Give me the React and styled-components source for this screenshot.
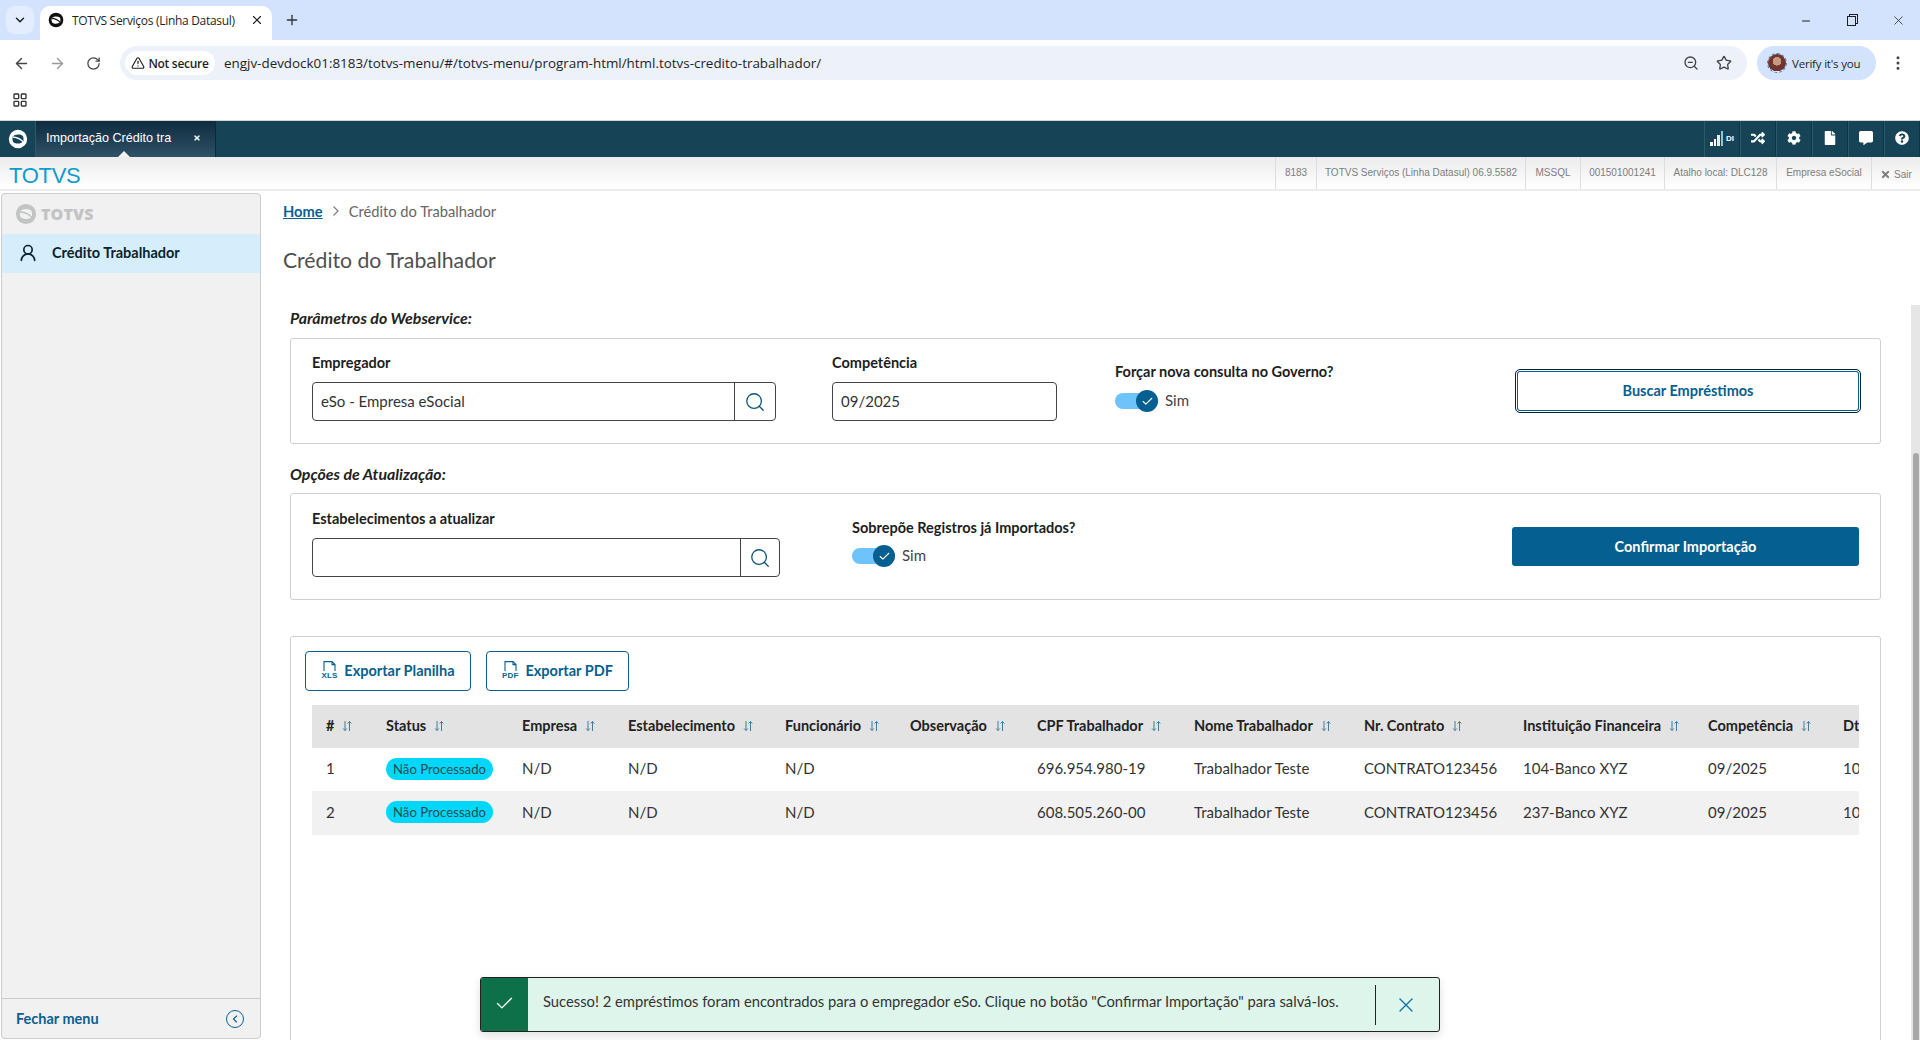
import React from "react";
import styled, { createGlobalStyle } from "styled-components";
import { FaRandom, FaCog, FaFile, FaCommentAlt, FaQuestionCircle, FaTimes } from "react-icons/fa";
import { ArrowLeft, ArrowRight, RotateCw, TriangleAlert, ZoomOut, Star, EllipsisVertical, ChevronDown, Plus, X, Minus, LayoutGrid, Search, Check, UserRound, ChevronLeft } from "lucide-react";

const Global = createGlobalStyle`
  html, body { margin: 0; padding: 0; height: 1040px; overflow: hidden; background: #fff; }
  * { box-sizing: border-box; }
  body { font-family: "Lato", "Noto Sans", sans-serif; color: #1a1a1a; }
`;

const Page = styled.div`
  width: 1920px; height: 1040px; display: flex; flex-direction: column; position: relative; overflow: hidden;
`;

/* browser chrome */
const TabStrip = styled.div`
  height: 40px; background: #d3e3fd; display: flex; align-items: flex-end; padding-left: 6px; flex: none;
`;
const TabMenu = styled.div`
  width: 28px; height: 28px; margin-bottom: 6px; border-radius: 9px; background: #e3edfd; display: flex; align-items: center; justify-content: center; color: #1f1f1f;
`;
const BrowserTab = styled.div`
  width: 232px; height: 34px; margin-left: 6px; background: #fff; border-radius: 10px 10px 0 0; display: flex; align-items: center; padding: 0 8px 6px; gap: 8px;
  font: 12px "Open Sans", sans-serif; color: #1f1f1f; white-space: nowrap;
`;
const TabTitle = styled.span` flex: 1; overflow: hidden; letter-spacing: -0.3px; `;
const NewTab = styled.div` margin: 0 0 12px 12px; color: #333; display: flex; `;
const WinControls = styled.div` margin: 13px 0 0 auto; align-self: flex-start; display: flex; gap: 35px; padding-right: 14px; color: #1f1f1f; align-items: center; `;
const RestoreIcon = styled.div`
  width: 9px; height: 10px; border: 1px solid #1f1f1f; box-shadow: 2px -2px 0 -1px #d3e3fd, 2px -2px 0 0 #1f1f1f;
`;
const Toolbar = styled.div`
  height: 40px; background: #fff; display: flex; align-items: flex-end; flex: none; padding-left: 3px;
`;
const NavIcon = styled.div`
  width: ${p => p.$w || 36}px; display: flex; justify-content: center; align-self: center; margin-top: 6px; color: ${p => p.$dim ? "#9a9a9a" : "#444"}; flex: none;
`;
const Omnibox = styled.div`
  margin-left: 9px; width: 1627px; height: 34px; border-radius: 17px; background: #ecf1fa; display: flex; align-items: center; padding: 0 5px; font: 13.42px "Open Sans", sans-serif; color: #1f1f1f; flex: none;
`;
const Secure = styled.div`
  height: 24px; width: 90px; border-radius: 12px; background: #fff; display: flex; align-items: center; justify-content: center; gap: 3px; font-size: 12px; font-weight: 600; margin-right: 9px; letter-spacing: -0.3px;
`;
const OmniRight = styled.div` margin-left: auto; display: flex; gap: 17px; padding-right: 10px; color: #444; align-items: center; `;
const Profile = styled.div`
  margin-left: 10px; width: 119px; height: 34px; border-radius: 17px; background: #d3e3fd; display: flex; align-items: center; padding-left: 11px; gap: 6px; font: 11.5px "Open Sans", sans-serif; color: #1f1f1f; letter-spacing: -0.2px; flex: none;
`;
const Avatar = styled.div`
  width: 18px; height: 18px; border-radius: 50%; background: radial-gradient(circle at 50% 40%, #c79a80 0 30%, #70352e 32% 70%, #e8e8f0 72%); outline: 1px dashed #4a6fb0;
`;
const Bookmarks = styled.div`
  height: 41px; background: #fff; border-bottom: 1px solid #d4d4d4; padding: 12px 12px 0; flex: none; color: #333;
`;

/* app top bar */
const TopBar = styled.div` height: 36px; background: #164356; display: flex; flex: none; `;
const LogoCell = styled.div`
  width: 36px; display: flex; align-items: center; justify-content: center; border-right: 1px solid #2b5a6d; color: #fff; padding-bottom: 1px;
`;
const AppTab = styled.div`
  position: relative; width: 180px; background: linear-gradient(#0e2c40, #2f5166); border-right: 1px solid #0d2a3a; display: flex; align-items: center; justify-content: space-between; padding: 0 14px 3px 10px;
  font: 12.6px "Liberation Sans", Arial, sans-serif; color: #fff;
  &::after { content: ""; position: absolute; left: 82px; bottom: 0; border: 6px solid transparent; border-top: 0; border-bottom-color: #f2f2f2; }
`;
const TopIcons = styled.div` margin-left: auto; display: flex; `;
const TopIcon = styled.div`
  width: 36px; display: flex; align-items: center; justify-content: center; gap: 3px; color: #fff; border-left: 1px solid #2b5a6d; border-right: 1px solid #0f3444; font-size: 14px; padding-bottom: 2px;
`;
const SmallDI = styled.span` font: 700 8px "Liberation Sans", sans-serif; `;
const Bars = styled.div` display: flex; align-items: flex-end; gap: 1px; height: 15px; `;
const Bar = styled.i` width: 2.5px; background: ${p => p.$c}; height: ${p => p.$h}px; display: block; `;

/* info strip */
const InfoBar = styled.div`
  height: 34px; background: linear-gradient(#ececec, #fff); border-bottom: 2px solid #ececec; display: flex; align-items: stretch; flex: none;
`;
const Brand = styled.div` font: 22px "Liberation Sans", Arial, sans-serif; color: #0f9bd0; padding-left: 9px; line-height: 37px; letter-spacing: -0.3px; `;
const InfoItems = styled.div` margin-left: auto; display: flex; `;
const InfoItem = styled.div`
  width: ${p => p.$w}px; border-left: 1px solid #ddd; display: flex; align-items: center; justify-content: center; gap: 3px; font: 10px "Liberation Sans", Arial, sans-serif; color: #7d7d7d; padding-bottom: 1px; white-space: nowrap;
`;
const SairItem = styled(InfoItem)` padding-top: 2px; padding-bottom: 0; `;

/* body */
const Body = styled.div` flex: 1; display: flex; min-height: 0; `;
const Sidebar = styled.aside`
  width: 260px; margin: 2px 0 1px 1px; background: #f1f1f1; border: 1px solid #ccc; border-radius: 4px; display: flex; flex-direction: column; flex: none;
`;
const SideLogo = styled.div`
  height: 40px; display: flex; align-items: center; padding: 0 0 0 13px; gap: 4px; color: #c2c4c4; font: 800 16px "Open Sans", sans-serif; letter-spacing: 0.1px;
`;
const SideItem = styled.div`
  height: 39px; background: #d6eefc; display: flex; align-items: center; padding: 0 0 2px 16px; gap: 14px; font: 700 14.5px "Lato", sans-serif; color: #0b2230;
`;
const SideFooter = styled.div`
  margin-top: auto; height: 40px; border-top: 1px solid #ccc; display: flex; align-items: center; justify-content: space-between; padding: 0 16px 0 14px; font: 700 14.5px "Lato", sans-serif; color: #0b5f90;
`;
const CircleBtn = styled.div`
  width: 18px; height: 18px; border-radius: 50%; border: 1.5px solid #0b5f90; display: flex; align-items: center; justify-content: center; color: #0b5f90;
`;
const Main = styled.main` flex: 1; min-width: 0; padding: 0 39px 0 22px; `;
const Crumbs = styled.nav`
  margin-top: 11px; height: 18px; display: flex; align-items: center; gap: 9px; font-size: 14.7px; color: #666;
`;
const CrumbLink = styled.a` color: #0b5f90; font-weight: 700; text-decoration: underline; `;
const Title = styled.h1` margin: 25px 0 0; font-weight: 400; font-size: 21.2px; line-height: 30px; color: #4f4f4f; `;
const Section = styled.div` margin: 0 0 0 7px; `;
const SectionLabel = styled.h2`
  margin: ${p => p.$mt}px 0 0; font-size: 15.9px; line-height: 18px; font-style: italic; font-weight: 700; color: #222;
`;
const Box = styled.div`
  margin-top: ${p => p.$mt}px; height: ${p => p.$h}px; border: 1px solid #d0d0d0; border-radius: 3px; display: flex; padding-left: 21px; align-items: flex-start;
`;
const Field = styled.div` width: ${p => p.$w}px; margin-top: ${p => p.$mt}px; margin-left: ${p => p.$ml || 0}px; flex: none; `;
const FieldLabel = styled.div` font-size: 14.5px; font-weight: 700; line-height: 18px; color: #1d1d1d; margin-bottom: ${p => p.$mb ?? 10}px; `;
const InputWrap = styled.div`
  height: 39px; border: 1px solid #444; border-radius: 4px; display: flex; align-items: center; font-size: 15px; color: #333; background: #fff;
`;
const InputText = styled.div` flex: 1; padding: 0 0 2px 8px; `;
const SearchBtn = styled.div`
  width: ${p => p.$w}px; height: 100%; border-left: 1px solid #444; display: flex; align-items: center; justify-content: center; color: #0b5278; flex: none;
`;
const ToggleRow = styled.div` display: flex; align-items: center; gap: 7px; font-size: 15px; color: #444; height: 22px; `;
const ToggleText = styled.span` margin-top: -2px; `;
const Track = styled.div` position: relative; width: 43px; height: 16px; background: #6ec3fb; border-radius: 8px; `;
const Knob = styled.div`
  position: absolute; right: 0; top: -3px; width: 22px; height: 22px; border-radius: 50%; background: #055f90; display: flex; align-items: center; justify-content: center; color: #fff;
`;
const OutlineBtn = styled.button`
  width: ${p => p.$w}px; height: ${p => p.$h}px; margin-top: ${p => p.$mt}px; margin-left: ${p => p.$ml}px; flex: none; background: #fff; border: 1px solid #0a2233; border-radius: 5px; font: 700 14.5px "Lato", sans-serif; color: #055f90; box-shadow: inset 0 0 0 1px #fff, inset 0 0 0 2px #055f90; padding: 0 0 2px;
`;
const SolidBtn = styled.button`
  width: ${p => p.$w}px; height: ${p => p.$h}px; margin-top: ${p => p.$mt}px; margin-left: ${p => p.$ml}px; flex: none; background: #055f90; border: 0; border-radius: 3px; font: 700 14.5px "Lato", sans-serif; color: #fff;
`;
const ResultBox = styled.div`
  margin-top: 36px; border: 1px solid #d0d0d0; border-radius: 3px; height: 500px; padding: 14px 21px 0 14px;
`;
const ExportRow = styled.div` display: flex; gap: 15px; `;
const ExportBtn = styled.button`
  height: 40px; width: ${p => p.$w}px; background: #fff; border: 1px solid #055f90; border-radius: 4px; display: flex; align-items: center; justify-content: center; gap: 7px; font: 700 14.5px "Lato", sans-serif; color: #055f90; padding: 0 0 2px;
`;
const DocIcon = styled.div` display: flex; flex-direction: column; align-items: center; color: #055f90; line-height: 1; `;
const DocTag = styled.span` font: 700 8px "Liberation Sans", sans-serif; letter-spacing: .1px; `;
const TableClip = styled.div` margin: 14px 0 0 7px; width: 1547px; overflow: hidden; `;
const Table = styled.table` border-collapse: collapse; table-layout: fixed; width: 1547px; `;
const Th = styled.th`
  width: ${p => p.$w}px; height: 43px; background: #e3e3e3; text-align: left; padding: 0 0 3px 14px; font-size: 14.5px; font-weight: 700; color: #222; white-space: nowrap;
`;
const SortIcon = styled.svg` margin-left: 8px; color: #3f7ca0; vertical-align: -1px; `;
const Tr = styled.tr` background: ${p => p.$alt ? "#f1f1f1" : "#fff"}; `;
const Td = styled.td` height: ${p => p.$h || 43}px; padding: 0 0 3px 14px; font-size: 15px; color: #333; white-space: nowrap; `;
const Badge = styled.span`
  display: inline-flex; align-items: center; justify-content: center; width: 107px; height: 22px; border-radius: 11px; background: #00d7fb; font-size: 13.2px; color: #2c4a52; vertical-align: -2px;
`;
const Toast = styled.div`
  position: absolute; left: 480px; top: 977px; width: 960px; height: 55px; background: #def5eb; border: 1px solid #222; border-radius: 3px; display: flex; align-items: center; box-shadow: 0 4px 10px rgba(0,0,0,.12); font-size: 14.75px; color: #333; overflow: hidden;
`;
const ToastIcon = styled.div` width: 47px; align-self: stretch; background: #0e7048; color: #fff; display: flex; align-items: center; justify-content: center; flex: none; padding-bottom: 2px; `;
const ToastText = styled.div` flex: 1; padding: 0 0 8px 15px; white-space: nowrap; `;
const ToastSep = styled.div` width: 1px; height: 40px; background: #222; margin-right: 18px; flex: none; `;
const ToastClose = styled.div` width: 45px; color: #0b6fa8; display: flex; flex: none; `;
const ScrollTrack = styled.div` position: absolute; right: 0; top: 305px; bottom: 0; width: 9px; background: #e6e6e6; `;
const ScrollThumb = styled.div` position: absolute; left: 2px; right: 1px; top: 148px; bottom: 0; border-radius: 4px 4px 0 0; background: #a8a8a8; `;

const Logo = ({ size = 18, fg = "currentColor" }) => (
  <svg width={size} height={size} viewBox="0 0 24 24">
    <path
      fillRule="evenodd"
      fill={fg}
      d="M12 1a11 11 0 1 0 0 22a11 11 0 1 0 0-22ZM5.5 9C8.5 6.3 14 5.6 17.8 8.4C18.6 10 18.8 12.2 18.5 14.6C15.6 17.9 10 18.6 6.2 15.6C5.4 13.8 5.2 11.2 5.5 9Z"
    />
    <path d="M5.5 8.8C10 9 14.6 10.8 18.6 14.8L17.6 15.8C14 12.6 10 10.8 5.5 10.6Z" fill={fg} />
  </svg>
);

const Sort = () => (
  <SortIcon width="10" height="12" viewBox="0 0 10 12" fill="none" stroke="currentColor" strokeWidth="1">
    <path d="M3 1v9.5M1.2 8.5 3 10.5l1.8-2M7.5 11V1.5M5.7 3.5 7.5 1.5l1.8 2" />
  </SortIcon>
);

const headers = [
  ["#", 60], ["Status", 136], ["Empresa", 106], ["Estabelecimento", 157], ["Funcionário", 125], ["Observação", 127],
  ["CPF Trabalhador", 157], ["Nome Trabalhador", 170], ["Nr. Contrato", 159], ["Instituição Financeira", 185], ["Competência", 135],
];
const rows = [
  ["1", "696.954.980-19", "104-Banco XYZ"],
  ["2", "608.505.260-00", "237-Banco XYZ"],
];
const infos = [["8183", 41], ["TOTVS Serviços (Linha Datasul) 06.9.5582", 209], ["MSSQL", 55], ["001501001241", 84], ["Atalho local: DLC128", 112], ["Empresa eSocial", 95]];

const Toggle = () => (
  <ToggleRow>
    <Track><Knob><Check size={13} strokeWidth={2} /></Knob></Track>
    <ToggleText>Sim</ToggleText>
  </ToggleRow>
);

const Doc = ({ tag }) => (
  <DocIcon>
    <svg width="15" height="10" viewBox="0 0 15 10" fill="none" stroke="currentColor" strokeWidth="1.1"><path d="M2 10V.6h8l3 3V10M10 .6v3h3" /></svg>
    <DocTag>{tag}</DocTag>
  </DocIcon>
);

const Chevron = () => (
  <svg width="8" height="12" viewBox="0 0 8 12" fill="none" stroke="#777" strokeWidth="1.1"><path d="M1.5 1.5 6 6l-4.5 4.5" /></svg>
);

export default function App() {
  return (
    <Page>
      <Global />
      <TabStrip>
        <TabMenu><ChevronDown size={14} strokeWidth={2.5} /></TabMenu>
        <BrowserTab>
          <Logo size={16} fg="#111" />
          <TabTitle>TOTVS Serviços (Linha Datasul)</TabTitle>
          <X size={14} />
        </BrowserTab>
        <NewTab><Plus size={16} /></NewTab>
        <WinControls>
          <Minus size={12} />
          <RestoreIcon />
          <X size={15} strokeWidth={1.2} />
        </WinControls>
      </TabStrip>
      <Toolbar>
        <NavIcon><ArrowLeft size={17} /></NavIcon>
        <NavIcon $dim><ArrowRight size={17} /></NavIcon>
        <NavIcon><RotateCw size={15} /></NavIcon>
        <Omnibox>
          <Secure><TriangleAlert size={14} />Not secure</Secure>
          engjv-devdock01:8183/totvs-menu/#/totvs-menu/program-html/html.totvs-credito-trabalhador/
          <OmniRight><ZoomOut size={16} /><Star size={16} /></OmniRight>
        </Omnibox>
        <Profile><Avatar />Verify it's you</Profile>
        <NavIcon $w={44}><EllipsisVertical size={18} /></NavIcon>
      </Toolbar>
      <Bookmarks><LayoutGrid size={16} /></Bookmarks>

      <TopBar>
        <LogoCell><Logo size={20} fg="#fff" /></LogoCell>
        <AppTab>Importação Crédito tra <FaTimes size={8} /></AppTab>
        <TopIcons>
          <TopIcon>
            <Bars><Bar $h={4} $c="#fff" /><Bar $h={7} $c="#fff" /><Bar $h={11} $c="#f0eecb" /><Bar $h={15} $c="#8ec4dd" /></Bars>
            <SmallDI>DI</SmallDI>
          </TopIcon>
          <TopIcon><FaRandom /></TopIcon>
          <TopIcon><FaCog /></TopIcon>
          <TopIcon><FaFile /></TopIcon>
          <TopIcon><FaCommentAlt /></TopIcon>
          <TopIcon><FaQuestionCircle /></TopIcon>
        </TopIcons>
      </TopBar>

      <InfoBar>
        <Brand>TOTVS</Brand>
        <InfoItems>
          {infos.map(([t, w]) => <InfoItem key={t} $w={w}>{t}</InfoItem>)}
          <SairItem $w={49}><FaTimes size={11} />Sair</SairItem>
        </InfoItems>
      </InfoBar>

      <Body>
        <Sidebar>
          <SideLogo><Logo size={22} />TOTVS</SideLogo>
          <SideItem><UserRound size={20} strokeWidth={2} />Crédito Trabalhador</SideItem>
          <SideFooter>Fechar menu<CircleBtn><ChevronLeft size={12} strokeWidth={2.2} /></CircleBtn></SideFooter>
        </Sidebar>
        <Main>
          <Crumbs><CrumbLink>Home</CrumbLink><Chevron />Crédito do Trabalhador</Crumbs>
          <Title>Crédito do Trabalhador</Title>
          <Section>
            <SectionLabel $mt={34}>Parâmetros do Webservice:</SectionLabel>
            <Box $mt={11} $h={106}>
              <Field $w={464} $mt={15}>
                <FieldLabel>Empregador</FieldLabel>
                <InputWrap><InputText>eSo - Empresa eSocial</InputText><SearchBtn $w={41}><Search size={22} strokeWidth={1.4} /></SearchBtn></InputWrap>
              </Field>
              <Field $w={225} $mt={15} $ml={56}>
                <FieldLabel>Competência</FieldLabel>
                <InputWrap><InputText>09/2025</InputText></InputWrap>
              </Field>
              <Field $w={300} $mt={24} $ml={58}>
                <FieldLabel $mb={9}>Forçar nova consulta no Governo?</FieldLabel>
                <Toggle />
              </Field>
              <OutlineBtn $w={346} $h={44} $mt={30} $ml={100}>Buscar Empréstimos</OutlineBtn>
            </Box>
            <SectionLabel $mt={21}>Opções de Atualização:</SectionLabel>
            <Box $mt={10} $h={107}>
              <Field $w={468} $mt={16}>
                <FieldLabel>Estabelecimentos a atualizar</FieldLabel>
                <InputWrap><InputText /><SearchBtn $w={39}><Search size={22} strokeWidth={1.4} /></SearchBtn></InputWrap>
              </Field>
              <Field $w={300} $mt={25} $ml={72}>
                <FieldLabel $mb={8}>Sobrepõe Registros já Importados?</FieldLabel>
                <Toggle />
              </Field>
              <SolidBtn $w={347} $h={39} $mt={33} $ml={360}>Confirmar Importação</SolidBtn>
            </Box>
            <ResultBox>
              <ExportRow>
                <ExportBtn $w={166}><Doc tag="XLS" />Exportar Planilha</ExportBtn>
                <ExportBtn $w={143}><Doc tag="PDF" />Exportar PDF</ExportBtn>
              </ExportRow>
              <TableClip>
                <Table>
                  <thead>
                    <tr>
                      {headers.map(([h, w]) => <Th key={h} $w={w}>{h}<Sort /></Th>)}
                      <Th $w={30}>Dt</Th>
                    </tr>
                  </thead>
                  <tbody>
                    {rows.map(([n, cpf, bank], i) => (
                      <Tr key={n} $alt={i === 1}>
                        <Td $h={i === 1 ? 44 : 43}>{n}</Td>
                        <Td><Badge>Não Processado</Badge></Td>
                        <Td>N/D</Td>
                        <Td>N/D</Td>
                        <Td>N/D</Td>
                        <Td />
                        <Td>{cpf}</Td>
                        <Td>Trabalhador Teste</Td>
                        <Td>CONTRATO123456</Td>
                        <Td>{bank}</Td>
                        <Td>09/2025</Td>
                        <Td>10</Td>
                      </Tr>
                    ))}
                  </tbody>
                </Table>
              </TableClip>
            </ResultBox>
          </Section>
        </Main>
      </Body>

      <ScrollTrack><ScrollThumb /></ScrollTrack>
      <Toast>
        <ToastIcon><Check size={21} strokeWidth={1.5} /></ToastIcon>
        <ToastText>Sucesso! 2 empréstimos foram encontrados para o empregador eSo. Clique no botão "Confirmar Importação" para salvá-los.</ToastText>
        <ToastSep />
        <ToastClose><X size={24} strokeWidth={1.3} /></ToastClose>
      </Toast>
    </Page>
  );
}
